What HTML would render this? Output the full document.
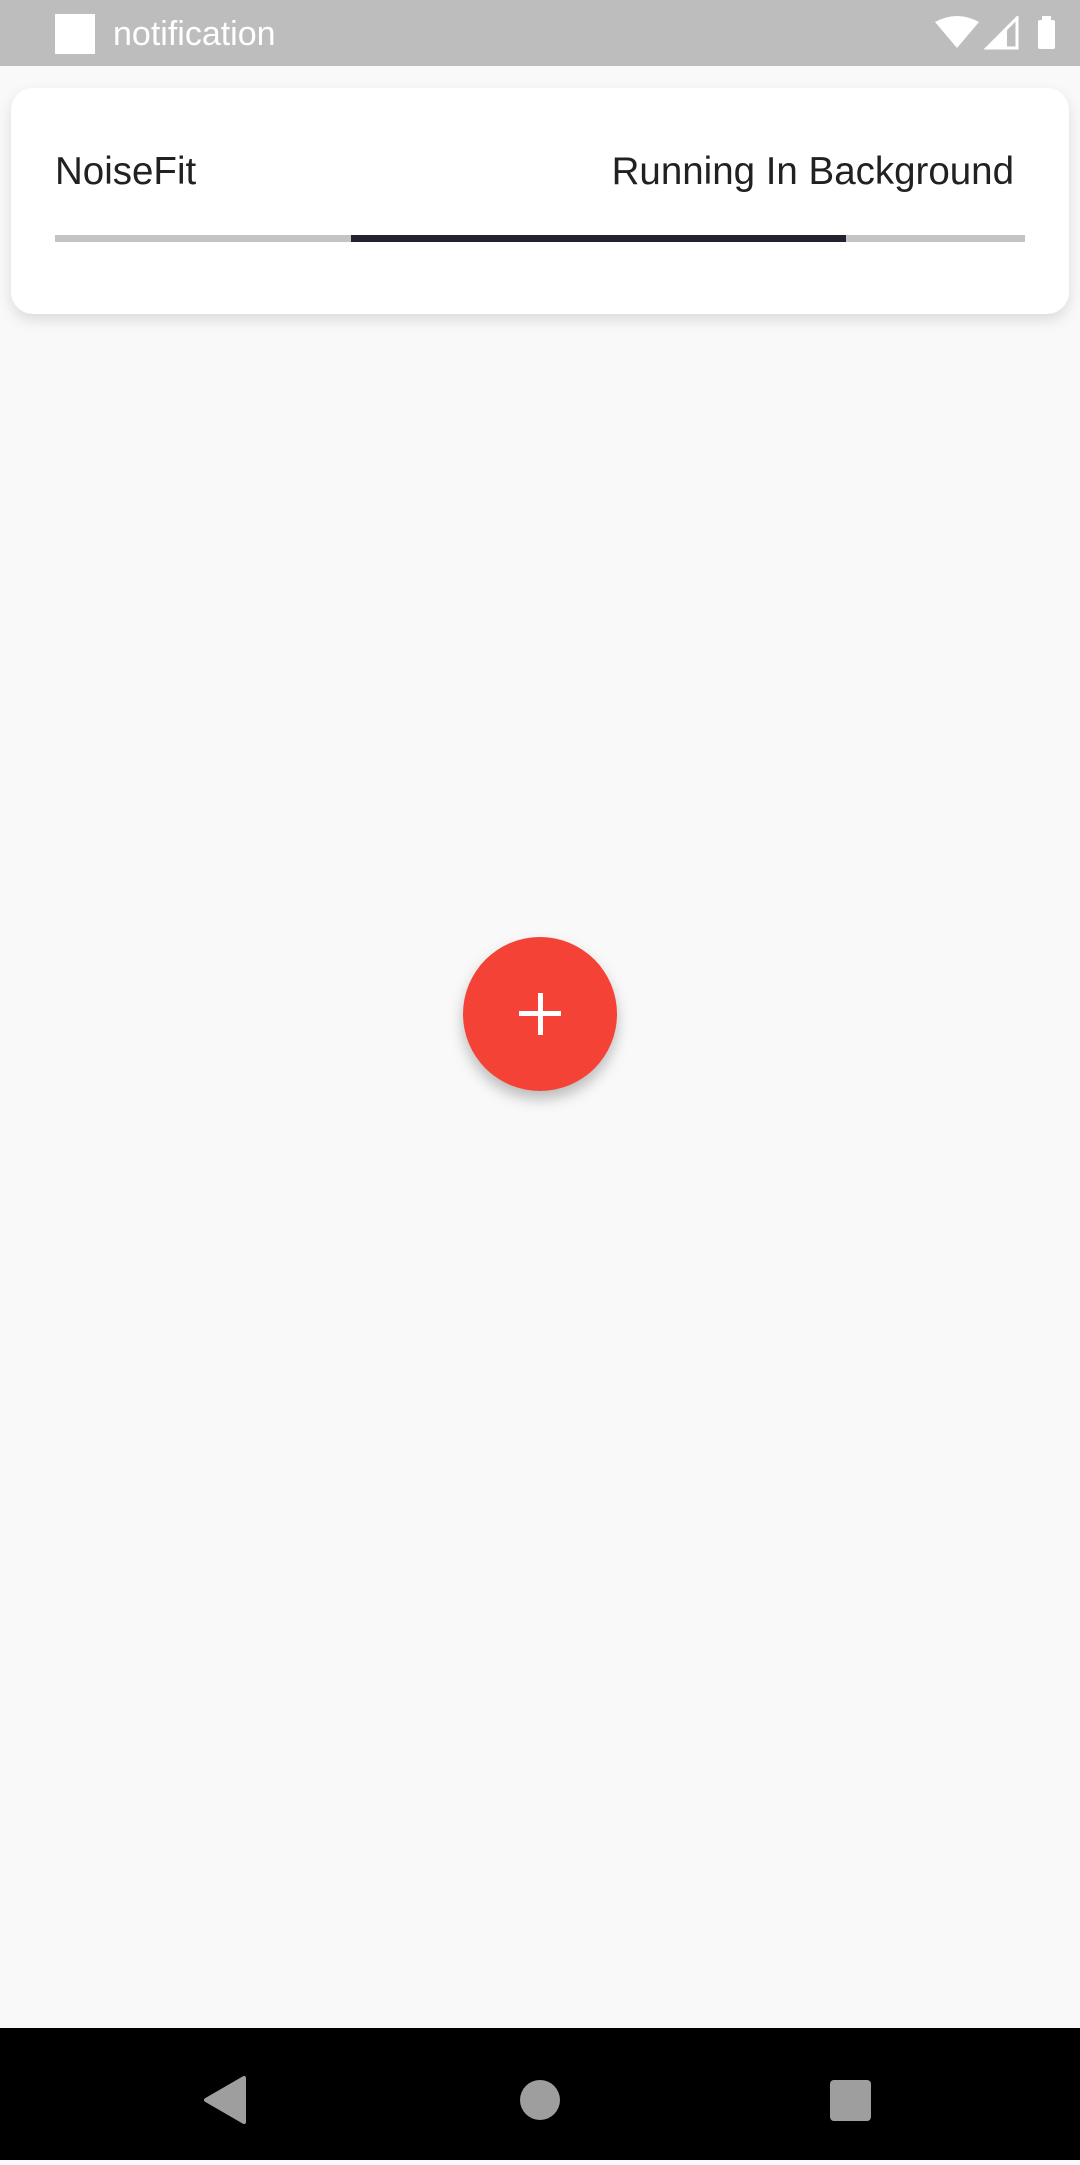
<!DOCTYPE html>
<html><head><meta charset="utf-8"><style>
*{margin:0;padding:0;box-sizing:border-box}
body{width:1080px;height:2160px;background:#f9f9f9;position:relative;overflow:hidden;font-family:"Liberation Sans",Roboto,sans-serif}
.sb{position:absolute;left:0;top:0;width:1080px;height:66px;background:#bdbdbd}
.sq{position:absolute;left:55px;top:14px;width:40px;height:40px;background:#fff}
.st{position:absolute;left:113px;top:14px;font-size:34px;color:#fff;line-height:40px}
.card{position:absolute;left:11px;top:88px;width:1058px;height:226px;background:#fff;border-radius:22px;box-shadow:0 6px 14px rgba(0,0,0,.12)}
.t{position:absolute;top:148px;font-size:38.5px;color:#212121;line-height:48px}
.bar{position:absolute;left:55px;top:235px;width:970px;height:7px;background:#c4c4c4}
.bar i{position:absolute;left:296px;top:0;width:495px;height:7px;background:#24222e}
.fab{position:absolute;left:463px;top:937px;width:154px;height:154px;border-radius:50%;background:#f44336;box-shadow:0 8px 14px rgba(0,0,0,.25)}
.fab:before{content:"";position:absolute;left:56px;top:74px;width:42px;height:5px;background:#fff}
.fab:after{content:"";position:absolute;left:74.5px;top:56px;width:5px;height:42px;background:#fff}
.nav{position:absolute;left:0;top:2028px;width:1080px;height:132px;background:#000}
</style></head><body>
<div class="sb"><div class="sq"></div><div class="st">notification</div>
<svg style="position:absolute;left:935px;top:16px" width="125" height="34" viewBox="0 0 125 34">
<path d="M0 6 Q22 -6 44 6 L22 32 Z" fill="#fff"/>
<path d="M52 32 L82 2 L82 32 Z" fill="none" stroke="#fff" stroke-width="3"/>
<path d="M52 32 L72 12 L72 32 Z" fill="#fff"/>
<rect x="103" y="4" width="17" height="29" rx="2" fill="#fff"/><rect x="107" y="0" width="9" height="5" fill="#fff"/>
</svg></div>
<div class="card">
</div>
<div class="t" style="left:55px">NoiseFit</div>
<div class="t" style="right:66px">Running In Background</div>
<div class="bar"><i></i></div>
<div class="fab"></div>
<div class="nav">
<svg width="1080" height="132" viewBox="0 0 1080 132">
<path d="M206 72 L244 50 L244 94 Z" fill="#9e9e9e" stroke="#9e9e9e" stroke-width="4" stroke-linejoin="round"/>
<circle cx="540" cy="72" r="20" fill="#9e9e9e"/>
<rect x="830" y="52" width="41" height="41" rx="4" fill="#9e9e9e"/>
</svg></div>
</body></html>
